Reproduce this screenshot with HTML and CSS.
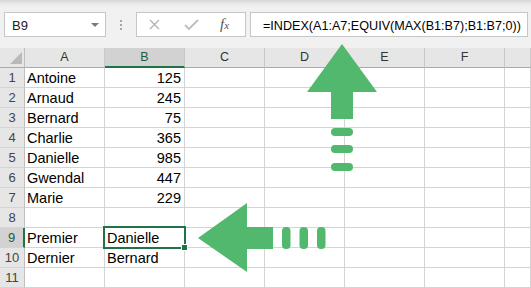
FILE: index.html
```html
<!DOCTYPE html>
<html>
<head>
    <title>INDEX EQUIV</title>
    <link rel="stylesheet" href="styles.css">
</head>
<body>
    <div class="formula-bar">
        <div class="name-box"><span>B9</span><span class="caret"></span></div>
        <div class="grip"><i></i><i></i><i></i></div>
        <div class="fn-box">
            <svg class="ico-x" width="11" height="11" viewBox="0 0 11 11"><path d="M1 1L10 10M10 1L1 10"/></svg>
            <svg class="ico-ok" width="15" height="11" viewBox="0 0 15 11"><path d="M1 6L5 10L14 1"/></svg>
            <span class="fx">f<span>x</span></span>
        </div>
        <div class="formula">=INDEX(A1:A7;EQUIV(MAX(B1:B7);B1:B7;0))</div>
    </div>

    <div class="sheet">
        <div class="corner"></div>
        <div class="ch">A</div><div class="ch sel">B</div><div class="ch">C</div><div class="ch">D</div><div class="ch">E</div><div class="ch">F</div><div class="ch"></div>

        <div class="rh">1</div><div class="c">Antoine</div><div class="c num">125</div><div class="c"></div><div class="c"></div><div class="c"></div><div class="c"></div><div class="c"></div>
        <div class="rh">2</div><div class="c">Arnaud</div><div class="c num">245</div><div class="c"></div><div class="c"></div><div class="c"></div><div class="c"></div><div class="c"></div>
        <div class="rh">3</div><div class="c">Bernard</div><div class="c num">75</div><div class="c"></div><div class="c"></div><div class="c"></div><div class="c"></div><div class="c"></div>
        <div class="rh">4</div><div class="c">Charlie</div><div class="c num">365</div><div class="c"></div><div class="c"></div><div class="c"></div><div class="c"></div><div class="c"></div>
        <div class="rh">5</div><div class="c">Danielle</div><div class="c num">985</div><div class="c"></div><div class="c"></div><div class="c"></div><div class="c"></div><div class="c"></div>
        <div class="rh">6</div><div class="c">Gwendal</div><div class="c num">447</div><div class="c"></div><div class="c"></div><div class="c"></div><div class="c"></div><div class="c"></div>
        <div class="rh">7</div><div class="c">Marie</div><div class="c num">229</div><div class="c"></div><div class="c"></div><div class="c"></div><div class="c"></div><div class="c"></div>
        <div class="rh">8</div><div class="c"></div><div class="c"></div><div class="c"></div><div class="c"></div><div class="c"></div><div class="c"></div><div class="c"></div>
        <div class="rh sel">9</div><div class="c">Premier</div><div class="c">Danielle</div><div class="c"></div><div class="c"></div><div class="c"></div><div class="c"></div><div class="c"></div>
        <div class="rh">10</div><div class="c">Dernier</div><div class="c">Bernard</div><div class="c"></div><div class="c"></div><div class="c"></div><div class="c"></div><div class="c"></div>
        <div class="rh">11</div><div class="c"></div><div class="c"></div><div class="c"></div><div class="c"></div><div class="c"></div><div class="c"></div><div class="c"></div>

        <span class="selection"><span class="handle"></span></span>
    </div>

    <svg class="arrows" width="531" height="288" viewBox="0 0 531 288">
        <polygon points="342,44 377,92 353,92 353,119 331,119 331,92 307,92"/>
        <rect x="331" y="128" width="22" height="8" rx="4"/>
        <rect x="331" y="145" width="22" height="8" rx="4"/>
        <rect x="331" y="163" width="22" height="8" rx="4"/>
        <polygon points="198,238 247,203 247,227 273,227 273,249 247,249 247,272"/>
        <rect x="282" y="227" width="8.5" height="22" rx="4"/>
        <rect x="299.5" y="227" width="8.5" height="22" rx="4"/>
        <rect x="317" y="227" width="8.5" height="22" rx="4"/>
    </svg>
</body>
</html>
```

FILE: styles.css
```css
body {
    margin: 0;
    width: 531px;
    height: 288px;
    overflow: hidden;
    position: relative;
    background: #fff;
    font-family: "Liberation Sans", Arial, sans-serif;
    color: #000;
}

/* formula bar */
.formula-bar {
    height: 48px;
    box-sizing: border-box;
    padding: 12px 3px 0 4px;
    display: flex;
    align-items: flex-start;
    background: linear-gradient(#d6d6d6, #ebebeb 4px, #f1f1f1 8px);
}
.name-box {
    width: 102px;
    height: 25px;
    box-sizing: border-box;
    border: 1px solid #c6c6c6;
    background: #fff;
    display: flex;
    align-items: center;
    justify-content: space-between;
    padding: 1px 6px 0 7px;
    font-size: 13px;
    color: #222;
}
.caret {
    border-left: 4px solid transparent;
    border-right: 4px solid transparent;
    border-top: 4px solid #7a7a7a;
}
.grip {
    width: 30px;
    display: flex;
    flex-direction: column;
    align-items: center;
    gap: 2px;
    padding-top: 8px;
}
.grip i {
    width: 2px;
    height: 2px;
    background: #a8a8a8;
}
.fn-box {
    width: 110px;
    height: 25px;
    box-sizing: border-box;
    border: 1px solid #c6c6c6;
    background: #fff;
    display: flex;
    align-items: center;
    padding-left: 12px;
}
.ico-x path {
    fill: none;
    stroke: #b4b4b4;
    stroke-width: 1.4;
}
.ico-ok {
    margin-left: 24px;
}
.ico-ok path {
    fill: none;
    stroke: #bdbdbd;
    stroke-width: 1.8;
}
.fx {
    margin-left: 21px;
    font-family: "Liberation Serif", serif;
    font-style: italic;
    font-size: 15px;
    color: #555;
}
.fx span {
    font-size: 11px;
}
.formula {
    flex: 1;
    margin-left: 4px;
    height: 25px;
    box-sizing: border-box;
    border: 1px solid #c6c6c6;
    background: #fff;
    padding: 3px 0 0 12px;
    font-size: 12.6px;
    line-height: 21px;
    white-space: nowrap;
    overflow: hidden;
}

/* sheet grid */
.sheet {
    position: relative;
    display: grid;
    grid-template-columns: 25px repeat(6, 80px) 1fr;
    grid-auto-rows: 20px;
}
.sheet > div {
    box-sizing: border-box;
    border-right: 1px solid #d4d4d4;
    border-bottom: 1px solid #d4d4d4;
    white-space: nowrap;
    overflow: hidden;
}
.c {
    font-size: 14.5px;
    line-height: 18px;
    padding: 1px 3px 0 2px;
}
.c.num {
    text-align: right;
}
.corner {
    background: #e6e6e6;
    display: flex;
    justify-content: flex-end;
    align-items: flex-end;
    padding: 0 2px 3px 0;
}
.sheet > .corner {
    border-bottom-color: #ababab;
    border-right-color: #bfbfbf;
}
.corner::after {
    content: "";
    border-left: 12px solid transparent;
    border-bottom: 12px solid #b9b9b9;
}
.ch {
    background: #e6e6e6;
    text-align: center;
    font-size: 12.5px;
    line-height: 19px;
    color: #333;
}
.sheet > .ch {
    border-bottom-color: #ababab;
    border-right-color: #c8c8c8;
}
.sheet > .ch.sel {
    background: #d2d2d2;
    border-bottom: 2px solid #217346;
    color: #1f5a39;
}
.rh {
    background: #e6e6e6;
    text-align: center;
    font-size: 13px;
    line-height: 18px;
    padding-top: 1px;
    color: #444;
}
.sheet > .rh {
    border-right-color: #bfbfbf;
}
.sheet > .rh.sel {
    background: #d2d2d2;
    border-right: 2px solid #217346;
    color: #1f5a39;
}

/* active cell B9 */
.selection {
    position: absolute;
    left: 103px;
    top: 178px;
    width: 83px;
    height: 23px;
    box-sizing: border-box;
    border: 2px solid #217346;
}
.handle {
    position: absolute;
    right: -4px;
    bottom: -4px;
    width: 5px;
    height: 5px;
    background: #217346;
    border: 1px solid #fff;
}

/* green arrows drawn over the sheet */
.arrows {
    position: absolute;
    left: 0;
    top: 0;
    fill: #52b86e;
}
```
